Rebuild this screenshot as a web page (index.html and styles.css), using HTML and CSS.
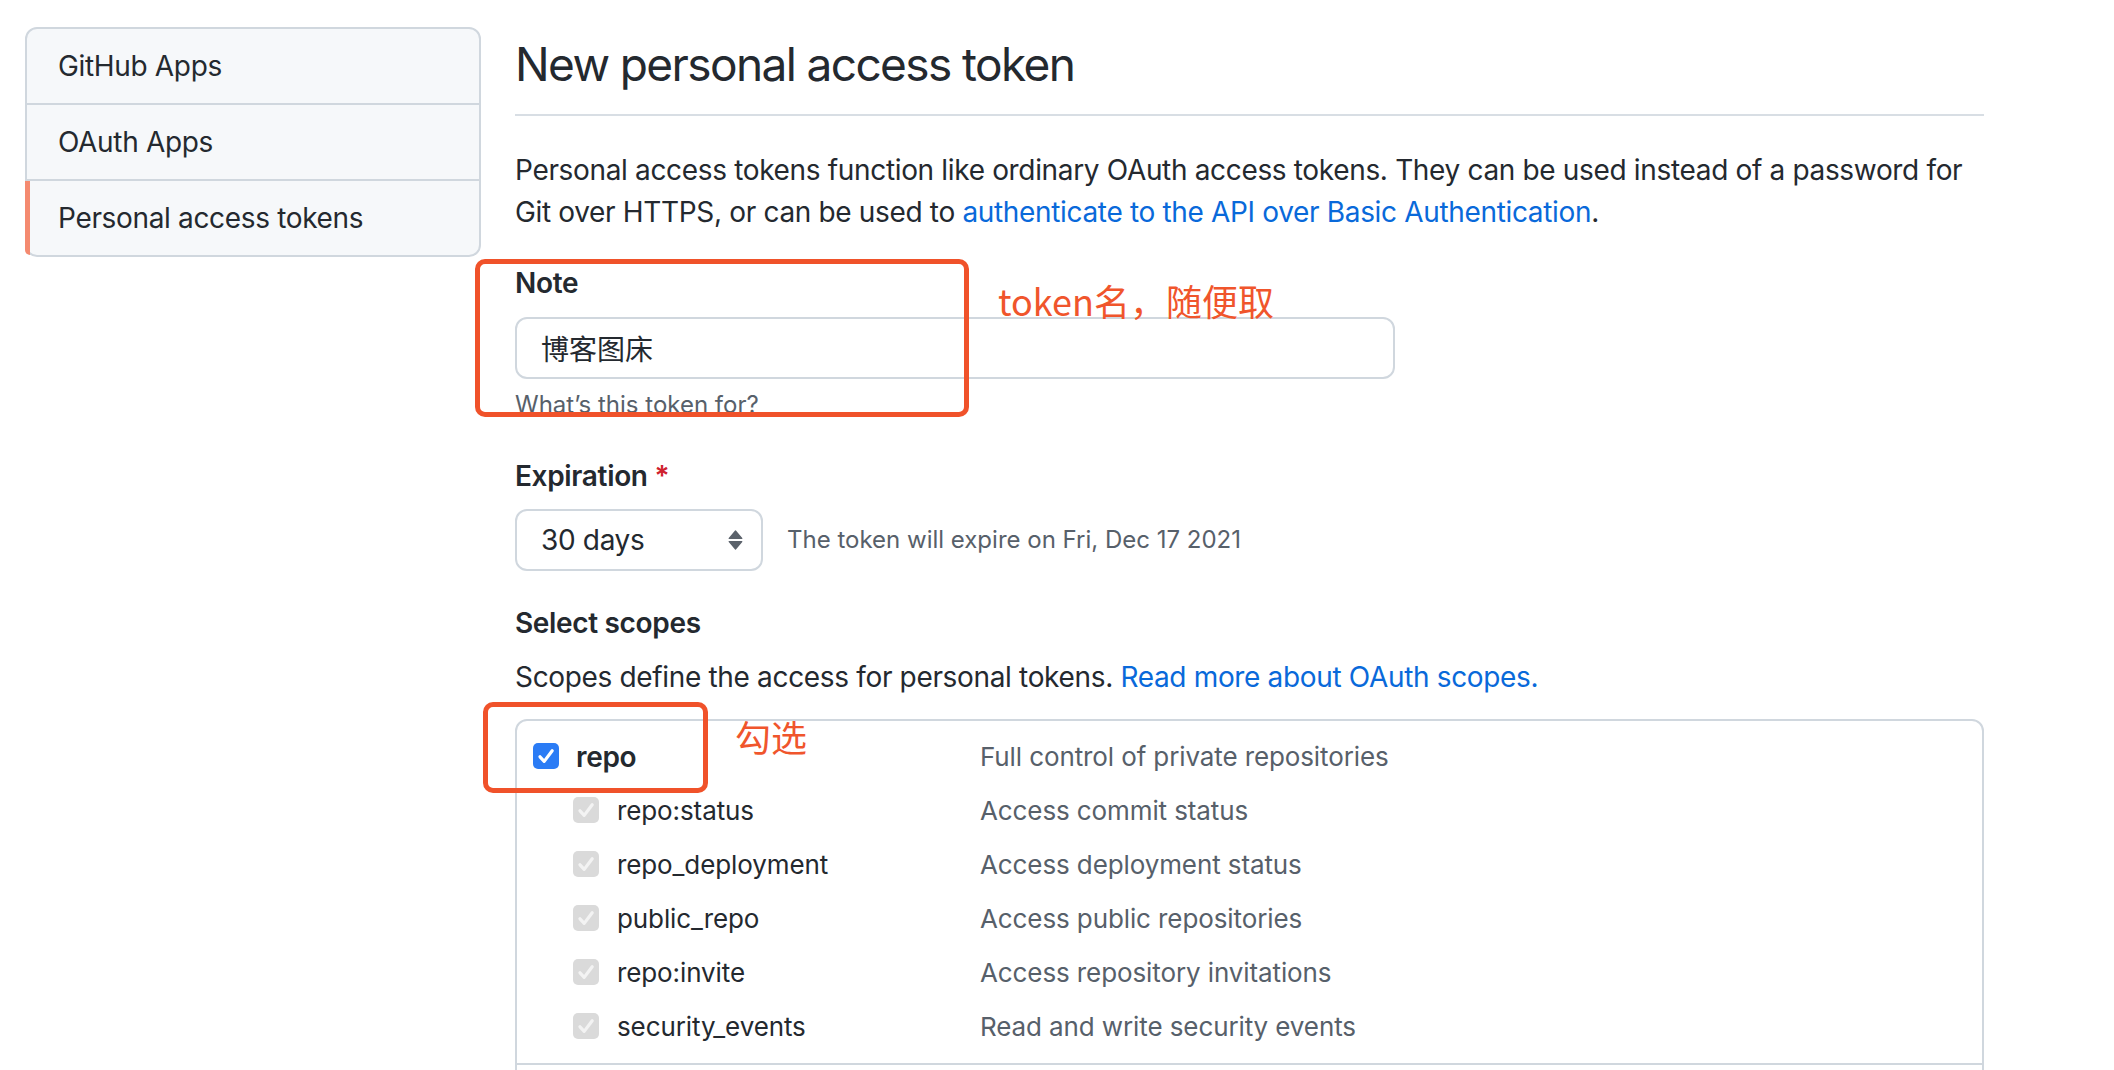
FILE: index.html
```html
<!DOCTYPE html>
<html lang="zh-CN">
<head>
<meta charset="utf-8">
<title>New personal access token</title>
<link rel="stylesheet" href="styles.css">
</head>
<body>
<div class="page">
  <nav class="menu">
    <a class="menu-item">GitHub Apps</a>
    <a class="menu-item">OAuth Apps</a>
    <a class="menu-item selected">Personal access tokens</a>
  </nav>

  <main class="content">
    <h2 class="subhead">New personal access token</h2>
    <p class="intro">Personal access tokens function like ordinary OAuth access tokens. They can be used instead of a password for Git over HTTPS, or can be used to <a class="link">authenticate to the API over Basic Authentication</a>.</p>

    <div class="form-group note-group">
      <label class="label">Note</label>
      <input class="input" type="text" value="博客图床">
      <p class="hint">What’s this token for?</p>
    </div>

    <div class="form-group exp-group">
      <label class="label">Expiration <span class="req">*</span></label>
      <div class="exp-row">
        <div class="select">
          <span>30 days</span>
          <svg class="arrows" width="15" height="20" viewBox="0 0 15 20"><path d="M1.2 8.5 L7.5 1 L13.8 8.5 Z" fill="#5b626b" stroke="#5b626b" stroke-width="1.2" stroke-linejoin="round"/><path d="M1.2 11.5 L13.8 11.5 L7.5 19 Z" fill="#5b626b" stroke="#5b626b" stroke-width="1.2" stroke-linejoin="round"/></svg>
        </div>
        <span class="exp-note">The token will expire on Fri, Dec 17 2021</span>
      </div>
    </div>

    <div class="form-group scopes-group">
      <label class="label">Select scopes</label>
      <p class="scopes-desc">Scopes define the access for personal tokens. <a class="link">Read more about OAuth scopes.</a></p>
      <div class="scopes">
        <div class="scope-set">
          <div class="scope-row top">
            <div class="scope-name">
              <svg class="cb" width="26" height="26" viewBox="0 0 26 26"><rect width="26" height="26" rx="5" fill="#2b7cf5"/><path d="M7 13.8 L11.2 18.4 L19.2 7.8" fill="none" stroke="#fff" stroke-width="3.2" stroke-linecap="round" stroke-linejoin="round"/></svg>
              <strong>repo</strong>
            </div>
            <div class="scope-desc">Full control of private repositories</div>
          </div>
          <div class="scope-row sub">
            <div class="scope-name">
              <svg class="cb" width="26" height="26" viewBox="0 0 26 26"><rect width="26" height="26" rx="5" fill="#dadada"/><path d="M7 13.8 L11.2 18.4 L19.2 7.8" fill="none" stroke="#f3f3f3" stroke-width="3.2" stroke-linecap="round" stroke-linejoin="round"/></svg>
              <span>repo:status</span>
            </div>
            <div class="scope-desc">Access commit status</div>
          </div>
          <div class="scope-row sub">
            <div class="scope-name">
              <svg class="cb" width="26" height="26" viewBox="0 0 26 26"><rect width="26" height="26" rx="5" fill="#dadada"/><path d="M7 13.8 L11.2 18.4 L19.2 7.8" fill="none" stroke="#f3f3f3" stroke-width="3.2" stroke-linecap="round" stroke-linejoin="round"/></svg>
              <span>repo_deployment</span>
            </div>
            <div class="scope-desc">Access deployment status</div>
          </div>
          <div class="scope-row sub">
            <div class="scope-name">
              <svg class="cb" width="26" height="26" viewBox="0 0 26 26"><rect width="26" height="26" rx="5" fill="#dadada"/><path d="M7 13.8 L11.2 18.4 L19.2 7.8" fill="none" stroke="#f3f3f3" stroke-width="3.2" stroke-linecap="round" stroke-linejoin="round"/></svg>
              <span>public_repo</span>
            </div>
            <div class="scope-desc">Access public repositories</div>
          </div>
          <div class="scope-row sub">
            <div class="scope-name">
              <svg class="cb" width="26" height="26" viewBox="0 0 26 26"><rect width="26" height="26" rx="5" fill="#dadada"/><path d="M7 13.8 L11.2 18.4 L19.2 7.8" fill="none" stroke="#f3f3f3" stroke-width="3.2" stroke-linecap="round" stroke-linejoin="round"/></svg>
              <span>repo:invite</span>
            </div>
            <div class="scope-desc">Access repository invitations</div>
          </div>
          <div class="scope-row sub">
            <div class="scope-name">
              <svg class="cb" width="26" height="26" viewBox="0 0 26 26"><rect width="26" height="26" rx="5" fill="#dadada"/><path d="M7 13.8 L11.2 18.4 L19.2 7.8" fill="none" stroke="#f3f3f3" stroke-width="3.2" stroke-linecap="round" stroke-linejoin="round"/></svg>
              <span>security_events</span>
            </div>
            <div class="scope-desc">Read and write security events</div>
          </div>
        </div>
      </div>
    </div>
  </main>

  <div class="anno-box anno-note"></div>
  <div class="anno-text anno-t1">token名，随便取</div>
  <div class="anno-box anno-repo"></div>
  <div class="anno-text anno-t2">勾选</div>
</div>
</body>
</html>
```

FILE: styles.css
```css
* { box-sizing: border-box; }

html, body {
  margin: 0;
  height: 100%;
  overflow: hidden;
  background: #ffffff;
}

body {
  font-family: Inter, "Noto Sans CJK SC", sans-serif;
  font-size: 28px;
  line-height: 42px;
  color: #24292f;
  letter-spacing: -0.012em;
}

.page {
  position: relative;
  display: flex;
  align-items: flex-start;
  gap: 34px;
  padding: 27px 0 0 25px;
}

/* sidebar menu */
.menu {
  width: 456px;
  flex: none;
  border: 2px solid #d0d7de;
  border-radius: 12px;
  background: #f6f8fa;
}

.menu-item {
  position: relative;
  display: flex;
  align-items: center;
  height: 76px;
  padding-left: 31px;
  border-top: 2px solid #d0d7de;
  color: #24292f;
}

.menu-item:first-child { border-top: 0; height: 74px; }

.menu-item.selected::before {
  content: "";
  position: absolute;
  left: -2px;
  top: 0;
  bottom: 0;
  width: 5px;
  background: #f48a70;
  border-bottom-left-radius: 6px;
}

/* main content */
.content {
  width: 1469px;
  flex: none;
  padding-top: 7px;
}

.subhead {
  margin: 0;
  font-size: 46px;
  line-height: 60px;
  font-weight: 400;
  letter-spacing: -0.035em;
  padding-bottom: 20px;
  border-bottom: 2px solid #d8dee4;
}

.intro { margin: 33px 0 0; }

.link { color: #0969da; text-decoration: none; }

.label {
  display: block;
  font-weight: 600;
}

.note-group { margin-top: 29px; }

.input {
  display: block;
  margin-top: 13px;
  width: 880px;
  height: 62px;
  padding: 0 24px;
  border: 2px solid #d0d7de;
  border-radius: 12px;
  background: #fff;
  font: inherit;
  letter-spacing: 0;
  color: #24292f;
  outline: none;
}

.hint {
  margin: 8px 0 0;
  font-size: 24px;
  line-height: 36px;
  letter-spacing: 0;
  color: #57606a;
}

.exp-group { margin-top: 32px; }

.req { color: #cf222e; }

.exp-row {
  display: flex;
  align-items: center;
  gap: 24px;
  margin-top: 12px;
}

.select {
  display: flex;
  align-items: center;
  justify-content: space-between;
  width: 248px;
  height: 62px;
  padding: 0 18px 0 24px;
  border: 2px solid #d0d7de;
  border-radius: 12px;
  background: #fff;
}

.exp-note {
  font-size: 24px;
  letter-spacing: 0;
  color: #57606a;
}

.scopes-group { margin-top: 31px; }

.scopes-desc { margin: 12px 0 0; }

.scopes {
  margin-top: 21px;
  padding-bottom: 48px;
  border: 2px solid #d0d7de;
  border-radius: 12px;
}

.scope-set {
  padding: 9px 0 9px;
  border-bottom: 2px solid #d0d7de;
}

.scope-row {
  display: grid;
  grid-template-columns: 447px 1fr;
  align-items: center;
  height: 54px;
  padding-left: 16px;
  font-size: 26px;
  letter-spacing: -0.004em;
}

.scope-row.top { font-size: 28px; }
.scope-row.top .scope-desc { font-size: 26px; }

.scope-name {
  display: flex;
  align-items: center;
  gap: 17px;
}

.scope-row.sub .scope-name { padding-left: 40px; gap: 18px; }

.scope-name strong { font-weight: 600; letter-spacing: -0.012em; }

.cb { flex: none; display: block; margin-top: -3px; }

.scope-desc { color: #57606a; }

/* annotation overlays */
.anno-box {
  position: absolute;
  border: 5px solid #f0522a;
  border-radius: 10px;
}

.anno-note { left: 475px; top: 259px; width: 494px; height: 158px; }
.anno-repo { left: 483px; top: 702px; width: 225px; height: 91px; }

.anno-text {
  position: absolute;
  font-family: "Noto Sans CJK SC", sans-serif;
  font-size: 36px;
  line-height: 36px;
  letter-spacing: 0;
  color: #f0552c;
  white-space: nowrap;
}

.anno-t1 { left: 998px; top: 282px; }
.anno-t2 { left: 735px; top: 718px; }
```
